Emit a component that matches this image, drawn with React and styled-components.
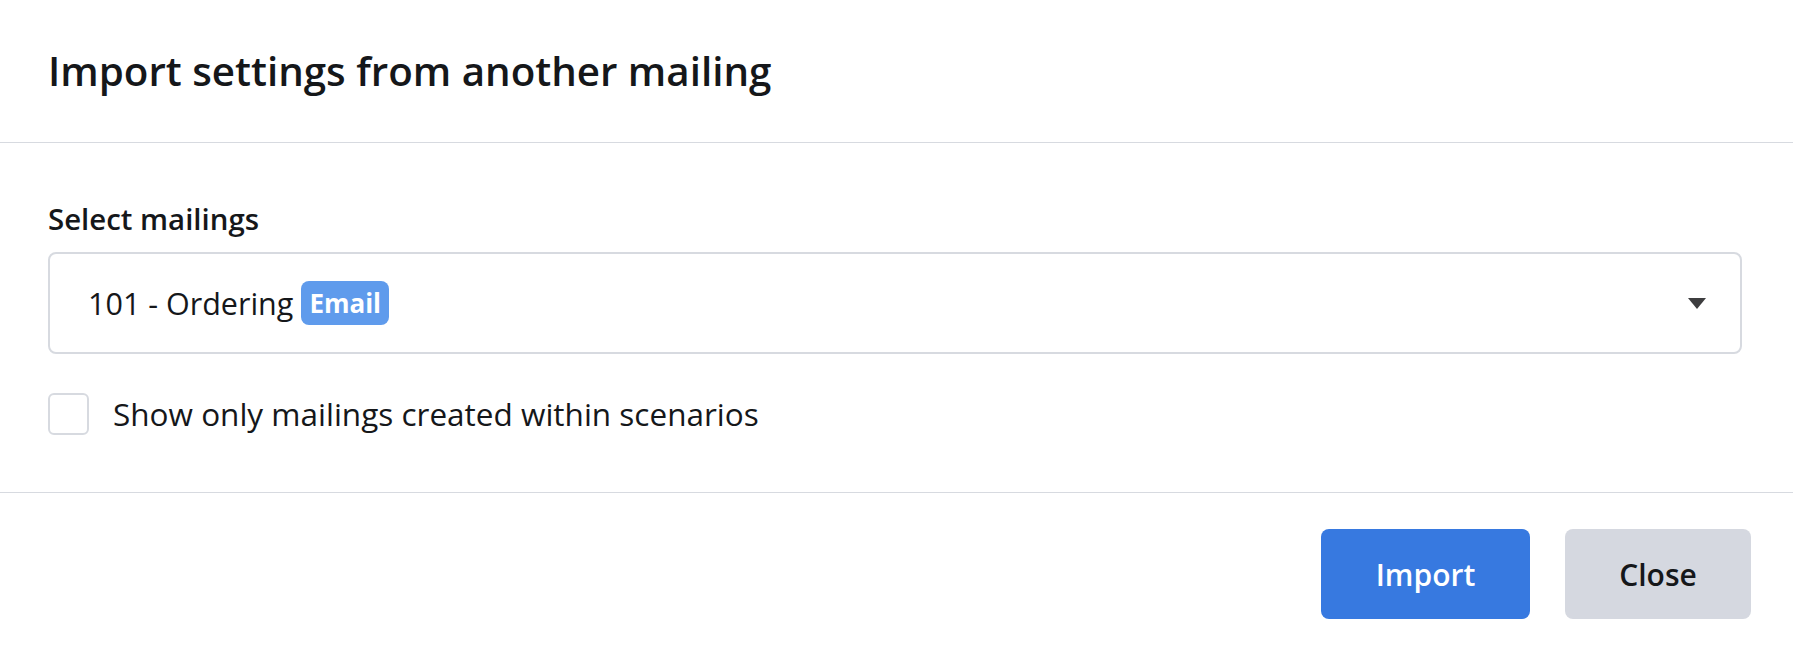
import React from 'react';
import styled, { createGlobalStyle } from 'styled-components';

const GlobalStyle = createGlobalStyle`
  html, body {
    margin: 0;
    padding: 0;
    background: #ffffff;
  }
  body {
    font-family: "Open Sans", "Noto Sans", "Liberation Sans", sans-serif;
    color: #15171a;
  }
  * {
    box-sizing: border-box;
  }
`;

const Modal = styled.div`
  width: 1793px;
  height: 652px;
  background: #ffffff;
  display: flex;
  flex-direction: column;
`;

const Header = styled.div`
  height: 143px;
  display: flex;
  align-items: center;
  padding: 0 48px;
  border-bottom: 1px solid #d7dae0;
`;

const Title = styled.h2`
  margin: 0;
  font-size: 40.3px;
  font-weight: 600;
  line-height: 48px;
  color: #15171a;
`;

const Body = styled.div`
  padding: 58px 51px 57px 48px;
  display: flex;
  flex-direction: column;
`;

const Label = styled.label`
  font-size: 29.4px;
  font-weight: 600;
  line-height: 36px;
  margin-bottom: 15px;
`;

const Select = styled.div`
  height: 102px;
  border: 2px solid #d7dae0;
  border-radius: 8px;
  display: flex;
  align-items: center;
  justify-content: space-between;
  padding: 0 34px 0 38px;
`;

const Value = styled.div`
  display: flex;
  align-items: center;
  font-size: 30.5px;
  line-height: 36px;
  color: #15171a;
`;

const Badge = styled.span`
  margin-left: 8px;
  height: 44px;
  padding: 0 8px;
  display: inline-flex;
  align-items: center;
  border-radius: 8px;
  background: #5f9bec;
  color: #ffffff;
  font-size: 26px;
  font-weight: 700;
`;

const Caret = styled.span`
  width: 0;
  height: 0;
  border-left: 9.5px solid transparent;
  border-right: 9.5px solid transparent;
  border-top: 11px solid #3d3d3f;
`;

const CheckRow = styled.label`
  margin-top: 39px;
  display: flex;
  align-items: center;
  gap: 24px;
  font-size: 31.5px;
  line-height: 42px;
  color: #15171a;
`;

const Box = styled.span`
  width: 41px;
  height: 42px;
  border: 2px solid #d7dae0;
  border-radius: 6px;
  background: #ffffff;
`;

const Footer = styled.div`
  border-top: 1px solid #d7dae0;
  display: flex;
  justify-content: flex-end;
  gap: 35px;
  padding: 36px 42px 0 0;
`;

const Button = styled.button`
  height: 90px;
  width: ${(p) => p.$width}px;
  border: none;
  border-radius: 8px;
  background: ${(p) => (p.$primary ? '#3779e0' : '#d5d8e0')};
  color: ${(p) => (p.$primary ? '#ffffff' : '#15171a')};
  font-family: inherit;
  font-size: 30px;
  font-weight: 600;
  cursor: pointer;
`;

export default function App() {
  return (
    <>
      <GlobalStyle />
      <Modal>
        <Header>
          <Title>Import settings from another mailing</Title>
        </Header>
        <Body>
          <Label>Select mailings</Label>
          <Select>
            <Value>
              101 - Ordering
              <Badge>Email</Badge>
            </Value>
            <Caret />
          </Select>
          <CheckRow>
            <Box />
            Show only mailings created within scenarios
          </CheckRow>
        </Body>
        <Footer>
          <Button $primary $width={209}>Import</Button>
          <Button $width={186}>Close</Button>
        </Footer>
      </Modal>
    </>
  );
}
